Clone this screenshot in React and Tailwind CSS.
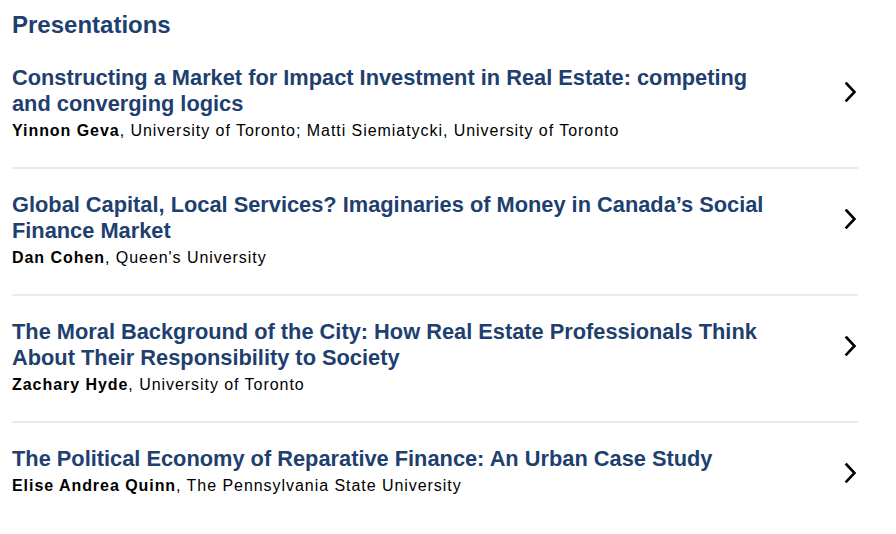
const PRESENTATIONS = [
  {
    title:
      "Constructing a Market for Impact Investment in Real Estate: competing and converging logics",
    authors: [
      { name: "Yinnon Geva", org: "University of Toronto" },
      { name: "Matti Siemiatycki", org: "University of Toronto", plain: true },
    ],
  },
  {
    title:
      "Global Capital, Local Services? Imaginaries of Money in Canada’s Social Finance Market",
    authors: [{ name: "Dan Cohen", org: "Queen's University" }],
  },
  {
    title:
      "The Moral Background of the City: How Real Estate Professionals Think About Their Responsibility to Society",
    authors: [{ name: "Zachary Hyde", org: "University of Toronto" }],
  },
  {
    title:
      "The Political Economy of Reparative Finance: An Urban Case Study",
    authors: [
      { name: "Elise Andrea Quinn", org: "The Pennsylvania State University" },
    ],
  },
];

const Chevron = () => (
  <svg width="14" height="22" viewBox="0 0 14 22" fill="none">
    <path
      d="M2.5 2.5 L10.5 11 L2.5 19.5"
      stroke="#000"
      strokeWidth="2.6"
      strokeLinecap="square"
    />
  </svg>
);

const App = () => {
  return (
    <div
      className="min-h-screen bg-white px-3 pt-[10px] text-black"
      style={{ fontFamily: '"Liberation Sans", Arial, sans-serif' }}
    >
      <h2 className="text-[24px] font-bold leading-[30px] text-[#1e3f6f]">
        Presentations
      </h2>

      <div className="mt-[25px] w-[846px]">
        {PRESENTATIONS.map((p, i) => (
          <div
            key={i}
            className={
              "flex items-start justify-between pb-[22px] " +
              (i > 0 ? "pt-[23px] " : "") +
              (i < PRESENTATIONS.length - 1 ? "border-b-2 border-[#ebebeb]" : "")
            }
          >
            <div className="w-[775px]">
              <h3 className="text-[21.8px] font-bold leading-[26px] text-[#1e3f6f]">
                {p.title}
              </h3>
              <p className="text-[16px] leading-[28px] tracking-[0.95px]">
                {p.authors.map((a, j) => (
                  <span key={j}>
                    {j > 0 && "; "}
                    {a.plain ? a.name : <b className="font-bold">{a.name}</b>}
                    {", " + a.org}
                  </span>
                ))}
              </p>
            </div>
            <div className="mt-[16px] shrink-0">
              <Chevron />
            </div>
          </div>
        ))}
      </div>
    </div>
  );
};

export default App;
